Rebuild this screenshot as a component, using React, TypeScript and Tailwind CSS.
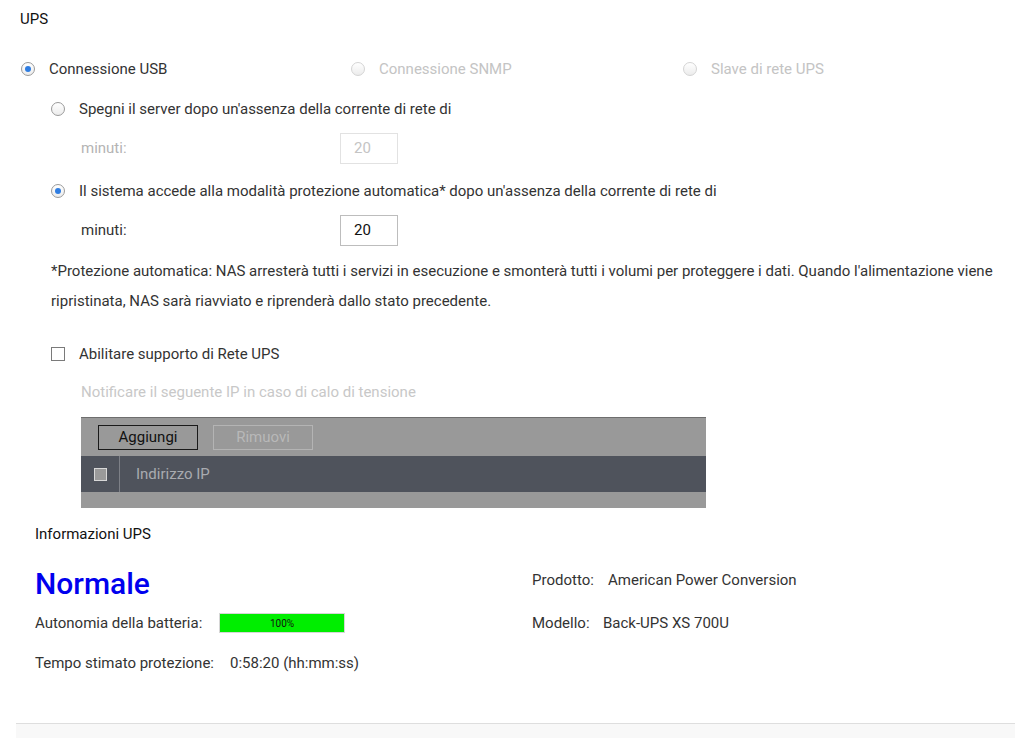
import React from 'react';

function Radio({ checked = false, disabled = false }: { checked?: boolean; disabled?: boolean }) {
  return (
    <span
      className={`relative inline-flex h-[14px] w-[14px] shrink-0 items-center justify-center rounded-full border bg-gradient-to-b from-white to-[#ececec] ${
        disabled ? 'border-[#d4d4d4]' : 'border-[#9a9a9a]'
      }`}
    >
      {checked && <span className="h-[6px] w-[6px] rounded-full bg-[#2f7de1]" />}
    </span>
  );
}

function RadioOption({ label, checked, disabled }: { label: string; checked?: boolean; disabled?: boolean }) {
  return (
    <label className="flex items-center gap-[14px]">
      <Radio checked={checked} disabled={disabled} />
      <span className={disabled ? 'text-[#c4c4c4]' : 'text-[#333]'}>{label}</span>
    </label>
  );
}

function MinutiRow({ disabled }: { disabled?: boolean }) {
  return (
    <div className="flex h-[40px] items-center pl-[61px]">
      <span className={`w-[259px] ${disabled ? 'text-[#b4b4b4]' : 'text-[#333]'}`}>minuti:</span>
      <div
        className={`flex h-[31px] w-[58px] items-center border px-[13px] ${
          disabled ? 'border-[#e2e2e2] text-[#c4c4c4]' : 'border-[#bdbdbd] text-[#111]'
        }`}
      >
        20
      </div>
    </div>
  );
}

export default function App() {
  return (
    <div className="relative h-[738px] w-[1015px] overflow-hidden bg-white text-[15px] text-[#333] font-['Roboto',_'Liberation_Sans',_sans-serif]">
      <div className="px-5">
        {/* Titolo */}
        <div className="flex h-[38px] items-center text-[#111]">UPS</div>

        {/* Tipo di connessione */}
        <div className="mt-[11px] flex h-[40px] items-center pl-[1px]">
          <div className="w-[330px]">
            <RadioOption label="Connessione USB" checked />
          </div>
          <div className="w-[332px]">
            <RadioOption label="Connessione SNMP" disabled />
          </div>
          <RadioOption label="Slave di rete UPS" disabled />
        </div>

        <div className="flex h-[40px] items-center pl-[31px]">
          <RadioOption label="Spegni il server dopo un'assenza della corrente di rete di" />
        </div>
        <div className="-mt-[1px]">
          <MinutiRow disabled />
        </div>

        <div className="mt-[3px] flex h-[40px] items-center pl-[31px]">
          <RadioOption checked label="Il sistema accede alla modalità protezione automatica* dopo un'assenza della corrente di rete di" />
        </div>
        <div className="-mt-[1px]">
          <MinutiRow />
        </div>

        <p className="mt-[6px] -mr-[12px] pl-[31px] leading-[30px] text-[#333]">
          *Protezione automatica: NAS arresterà tutti i servizi in esecuzione e smonterà tutti i volumi per proteggere i dati. Quando l'alimentazione viene ripristinata, NAS sarà riavviato e riprenderà dallo stato precedente.
        </p>

        {/* Rete UPS */}
        <div className="mt-[18px] flex h-[40px] items-center gap-[14px] pl-[31px]">
          <span className="h-[14px] w-[14px] border border-[#7a7a7a] bg-white" />
          <span>Abilitare supporto di Rete UPS</span>
        </div>
        <div className="flex h-[36px] items-center pl-[61px] text-[#c8c8c8]">
          Notificare il seguente IP in caso di calo di tensione
        </div>

        <div className="ml-[61px] mt-[7px] w-[625px] border-t border-[#6e6e6e] bg-[#999999]">
          <div className="flex h-[38px] items-center gap-[15px] pl-[17px]">
            <div className="flex h-[25px] w-[100px] items-center justify-center border border-[#1a1a1a] text-[#111]">
              Aggiungi
            </div>
            <div className="flex h-[25px] w-[100px] items-center justify-center border border-[#b4b4b4] text-[#b8b8b8]">
              Rimuovi
            </div>
          </div>
          <div className="flex h-[36px] items-center bg-[#4f535c]">
            <div className="flex h-full w-[39px] items-center justify-center border-r border-[#7d8087] py-[6px]">
              <span className="h-[13px] w-[13px] border border-[#d8d8d8] bg-[#9a9a9a]" />
            </div>
            <span className="pl-[16px] text-[#a9abb0]">Indirizzo IP</span>
          </div>
          <div className="h-[16px]" />
        </div>

        {/* Informazioni UPS */}
        <div className="mt-[8px] flex h-[36px] items-center pl-[15px] text-[#111]">
          Informazioni UPS
        </div>

        <div className="mt-[8px] flex pl-[15px]">
          <div className="w-[497px]">
            <div className="flex h-[46px] items-center text-[30px] font-medium text-[#0000ee]">Normale</div>
            <div className="flex h-[34px] items-center">
              <span className="w-[184px]">Autonomia della batteria:</span>
              <div className="flex h-[20px] w-[126px] items-center justify-center border border-[#d6d6d6] bg-[#00ee00] text-[10px] text-[#111]">
                100%
              </div>
            </div>
            <div className="mt-[6px] flex h-[34px] items-center">
              <span className="w-[195px]">Tempo stimato protezione:</span>
              <span>0:58:20 (hh:mm:ss)</span>
            </div>
          </div>
          <div>
            <div className="flex h-[40px] items-center">
              <span className="w-[76px]">Prodotto:</span>
              <span>American Power Conversion</span>
            </div>
            <div className="mt-[3px] flex h-[40px] items-center">
              <span className="w-[71px]">Modello:</span>
              <span>Back-UPS XS 700U</span>
            </div>
          </div>
        </div>
      </div>

      <div className="absolute bottom-0 left-[16px] right-0 h-[15px] border-t border-[#dedede] bg-[#f8f8f8]" />
    </div>
  );
}
